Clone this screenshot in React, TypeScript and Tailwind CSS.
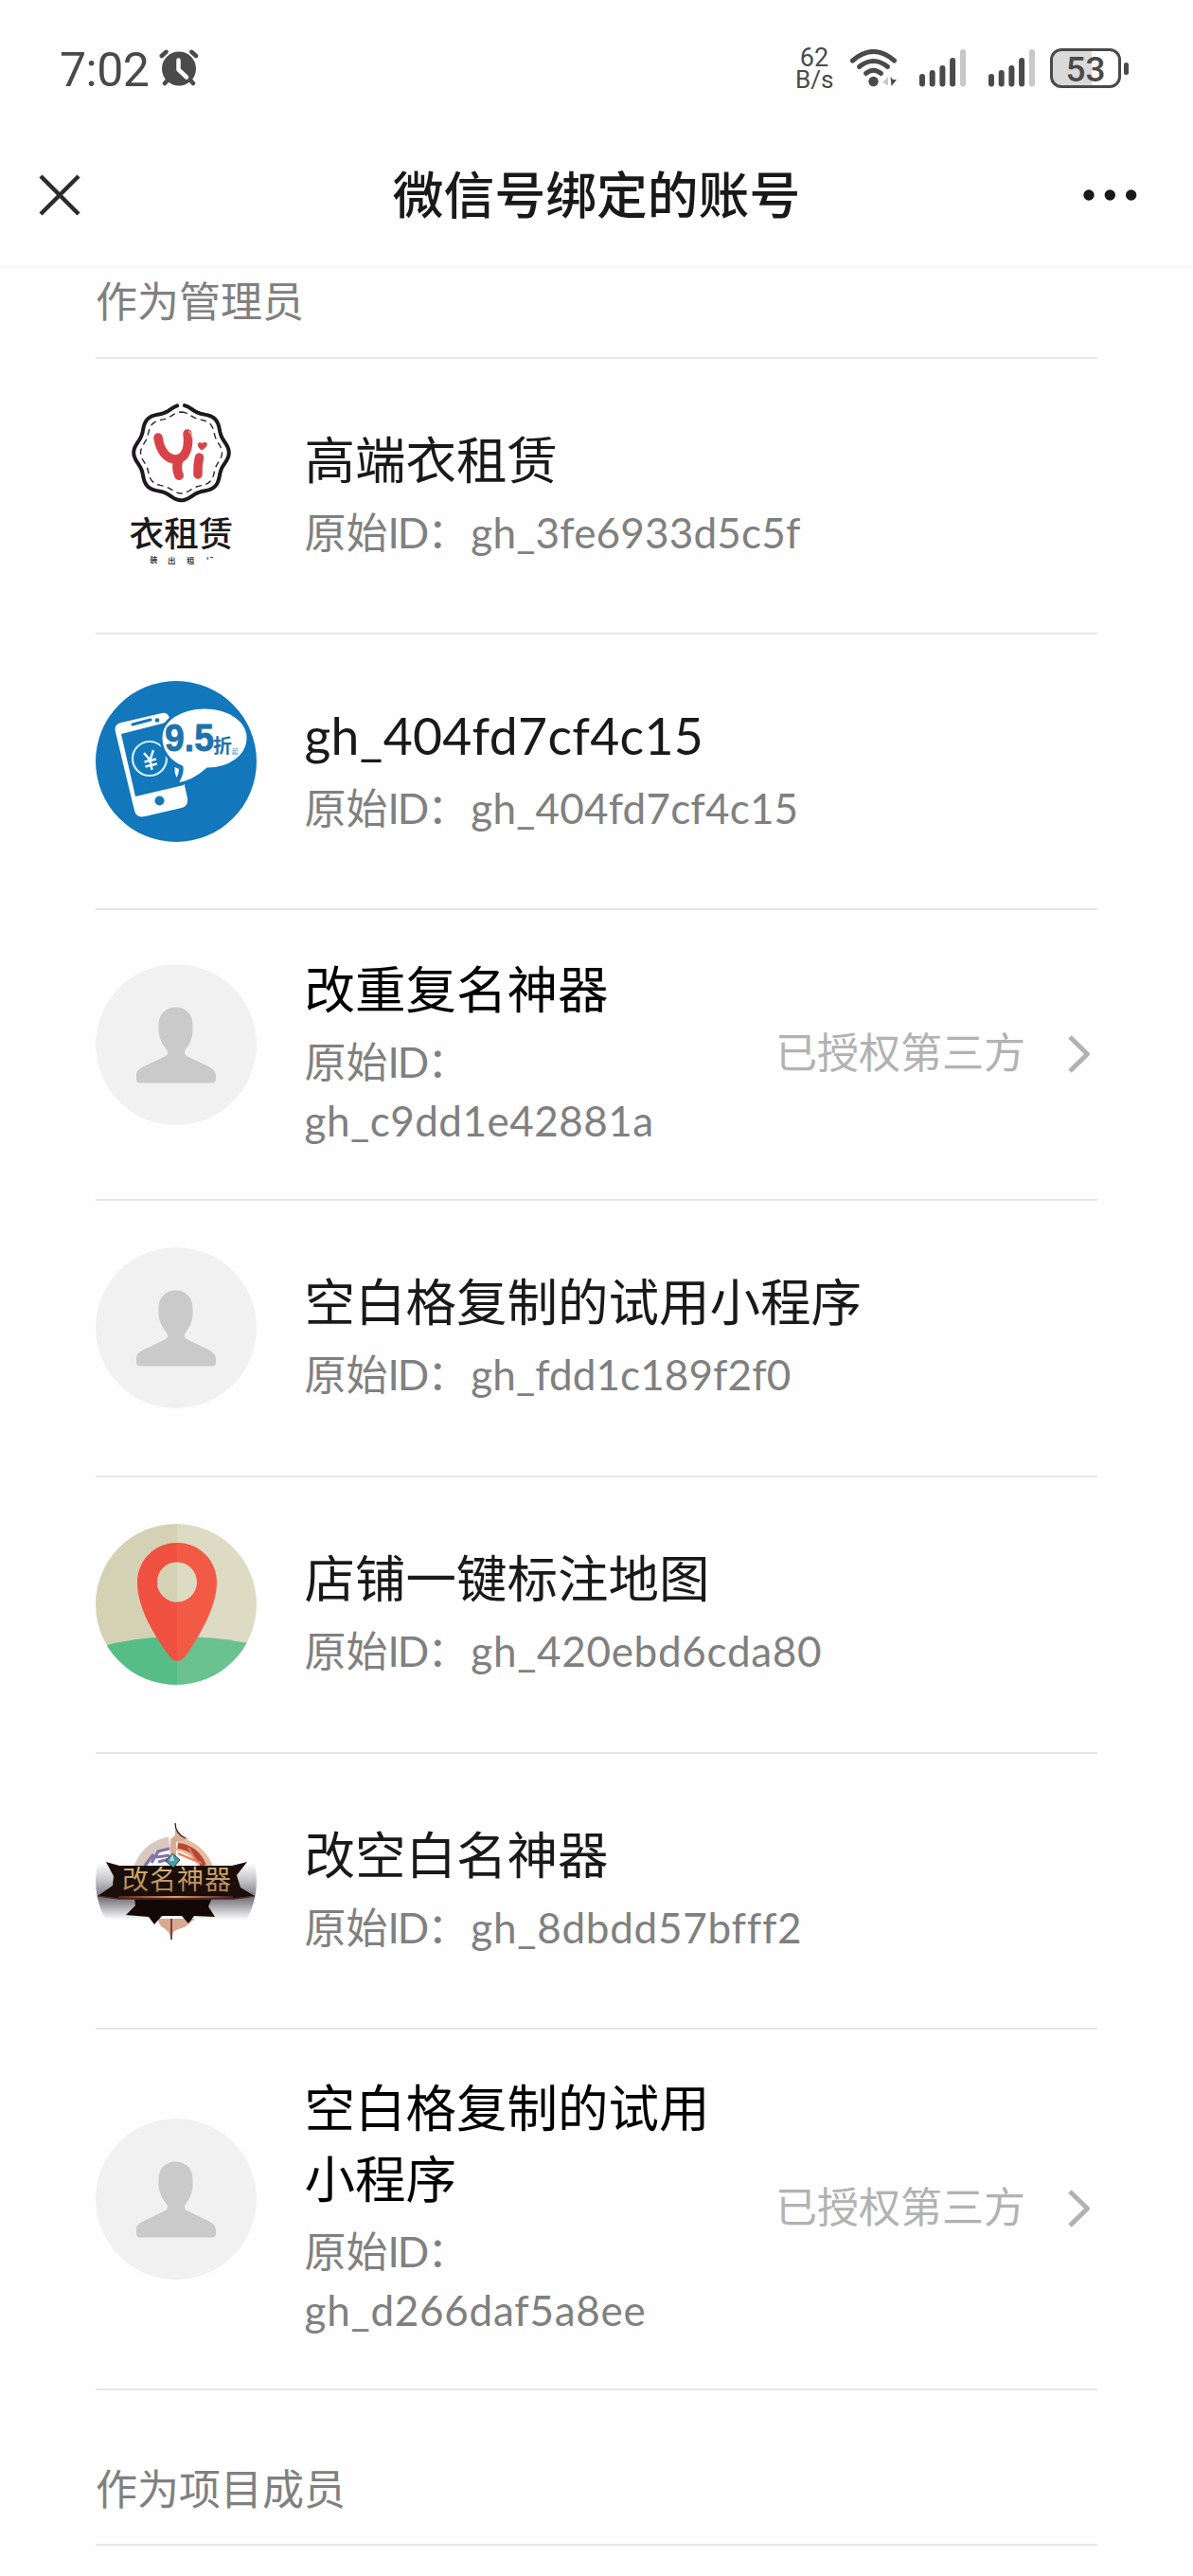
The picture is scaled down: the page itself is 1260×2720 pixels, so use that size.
import React from "react";

const scallop = (cx: number, cy: number, base: number, wave: number, gap: number) => {
  const pts: string[] = [];
  for (let i = gap; i <= 360 - gap; i += 3) {
    const t = (i * Math.PI) / 180;
    const r = base + wave * Math.cos(8 * t);
    pts.push(`${(cx + r * Math.sin(t)).toFixed(2)},${(cy - r * Math.cos(t)).toFixed(2)}`);
  }
  return "M" + pts.join("L");
};

const CJK = "'Lato','Noto Sans CJK SC',sans-serif";

function RentalLogo() {
  return (
    <svg viewBox="0 0 170 170" className="size-[170px] shrink-0 overflow-visible">
      <path d={scallop(90.5, 50, 48, 2.3, 4)} fill="none" stroke="#1c1a1c" strokeWidth="4" strokeLinecap="round" strokeLinejoin="round" />
      <path d={scallop(90.5, 50, 41.2, 1.8, 0)} fill="none" stroke="#2a282a" strokeWidth="1.4" strokeDasharray="6.5 4.5" />
      <g fill="none" stroke="#d8434a" strokeLinecap="round">
        <path d="M66 34C68 48 75 57 85 57C96 56 99 43 97 30" strokeWidth="9.5" />
        <path d="M88 57C85 63 86 69 88 74" strokeWidth="10" />
        <path d="M109.500 55C108 61 107.500 66 108 73" strokeWidth="9.500" />
      </g>
      <path d="M98 27.500q4 1.500 4 7" fill="none" stroke="#f6c9cb" strokeWidth="1.200" />
      <path d="M112 47C106 43 108 37 112.500 40.500C117 37 121 42 112 47Z" fill="#d8434a" stroke="#d8434a" strokeWidth="1" />
      <text x="90.5" y="148.500" textAnchor="middle" fontSize="36" fontWeight="500" fill="#1c1a1c" textLength="110" lengthAdjust="spacingAndGlyphs" fontFamily={CJK}>衣租赁</text>
      <g fontFamily={CJK} fontSize="8.500" fontWeight="500" fill="#222">
        <text x="57" y="166">装</text>
        <text x="76" y="167">出</text>
        <text x="96" y="167">租</text>
      </g>
      <path d="M117 161h2.500M121 160.500h3M118 162.500h1" stroke="#444" strokeWidth="1" />
    </svg>
  );
}

function PhoneLogo() {
  return (
    <svg viewBox="0 0 170 170" className="size-[170px] shrink-0">
      <circle cx="85" cy="85" r="85" fill="#1277bb" />
      <path d="M27 44L70 34Q76 33 78 39L97 124Q98 132 91 134L52 143Q43 145 41 137L21 54Q19 46 27 44Z" fill="#fff" />
      <path d="M27 56L78 43L93 110L42 122Z" fill="#1277bb" />
      <path d="M39 46L58 41" stroke="#1277bb" strokeWidth="3" strokeLinecap="round" />
      <circle cx="65" cy="41.500" r="2.300" fill="#1277bb" />
      <circle cx="67.500" cy="126.500" r="5" fill="#1277bb" />
      <circle cx="57" cy="82" r="18" fill="none" stroke="#cdf1fb" strokeWidth="2.200" />
      <path d="M51 76L57.500 83.500L61 73M57.500 83.500L59.500 94M51.500 85.500L64 82.500M52.500 90.500L65 87.500" fill="none" stroke="#eafaff" strokeWidth="2.500" />
      <path d="M115 28C141 28 161 42 161 60C161 80 141 93 118 93C108 102 97 108 85 109C90 102 92 97 91 91C77 85 69 73 69 60C69 41 90 28 115 28Z" fill="#fff" stroke="#1277bb" strokeWidth="3" />
      <path d="M83 90L91 93Q93 99 86 107Q82 99 83 90Z" fill="#1277bb" />
      <path d="M83.500 91L88 93Q88 98 85.500 102Q83 97 83.500 91Z" fill="#fff" />
      <text x="73" y="74" fontFamily="'Liberation Sans',sans-serif" fontWeight="700" fontSize="41" fill="#1d72ad" stroke="#1d72ad" strokeWidth=".8" textLength="52" lengthAdjust="spacingAndGlyphs">9.5</text>
      <text x="124" y="76" fontFamily={CJK} fontWeight="700" fontSize="20" fill="#1d72ad">折</text>
      <text x="144" y="77" fontFamily={CJK} fontSize="6.500" fill="#4b87ae">起</text>
    </svg>
  );
}

function PersonLogo() {
  return (
    <svg viewBox="0 0 170 170" className="size-[170px] shrink-0">
      <circle cx="85" cy="85" r="85" fill="#f1f1f1" />
      <path d="M84.500 45.500C95 45.500 102.500 53 102.500 64V72C102 79 99 85 94.500 91Q92.500 95 97 97.500L119 108Q127 112 127 118V121Q127 125.500 123 125.500H46.500Q43 125.500 43 121.500V117Q43 112 49 109L73 97.500Q77.500 95 75.500 91C70 84 67 78 66.500 71V64C66.500 53 74 45.500 84.500 45.500Z" fill="#cacaca" />
    </svg>
  );
}

function MapLogo() {
  return (
    <svg viewBox="0 0 170 170" className="size-[170px] shrink-0">
      <defs>
        <clipPath id="mapDisc"><circle cx="85" cy="85" r="85" /></clipPath>
      </defs>
      <g clipPath="url(#mapDisc)">
        <path d="M0 0H86V170H0Z" fill="#d5d1b4" />
        <path d="M86 0H170V170H86Z" fill="#dddbc3" />
        <path d="M0 131Q43 119 86 119V170H0Z" fill="#56bd87" />
        <path d="M86 119Q130 119 170 128V170H86Z" fill="#69c28f" />
      </g>
      <path d="M86 20C62 20 44 39 44 62C44 88 62 118 76 137Q81 145 86 145Z" fill="#f0503f" />
      <path d="M86 20C110 20 128 39 128 62C128 86 112 114 97 137Q91 145 86 145Z" fill="#f35a46" />
      <circle cx="86" cy="61.500" r="21" fill="#dddbc3" />
      <path d="M86 40.500A21 21 0 0 0 86 82.500Z" fill="#d5d1b4" />
    </svg>
  );
}

function BadgeLogo() {
  return (
    <svg viewBox="0 -17 170 170" className="size-[170px] shrink-0">
      <defs>
        <clipPath id="badgeDisc"><circle cx="85" cy="68" r="85" /></clipPath>
        <linearGradient id="haze" x1="0" y1="0" x2="0" y2="1">
          <stop offset="0" stopColor="#fefefe" />
          <stop offset=".32" stopColor="#c4c2c5" />
          <stop offset=".62" stopColor="#77737a" />
          <stop offset="1" stopColor="#fefefe" />
        </linearGradient>
        <linearGradient id="gold" x1="0" y1="0" x2="0" y2="1">
          <stop offset="0" stopColor="#d9bd83" />
          <stop offset="1" stopColor="#a67d49" />
        </linearGradient>
        <linearGradient id="glow" x1="0" y1="0" x2="1" y2="0">
          <stop offset="0" stopColor="#5a2116" />
          <stop offset=".5" stopColor="#f19a52" />
          <stop offset="1" stopColor="#4a1b2b" />
        </linearGradient>
      </defs>
      <g clipPath="url(#badgeDisc)">
        <rect y="49" width="170" height="60" fill="url(#haze)" />
      </g>
      <circle cx="83" cy="70" r="42" fill="#fdf9f5" />
      <path d="M46 57A40 40 0 0 1 78 28" fill="none" stroke="#d8c8bf" strokeWidth="13" />
      <path d="M52 52L61 40M59 49L66 37M64 43L78 41M65 37L78 34M66 48L78 45" stroke="#7d74aa" strokeWidth="3" />
      <path d="M86 29A40 40 0 0 1 118 57" fill="none" stroke="#e3bda2" strokeWidth="14" />
      <path d="M87 31Q106 33 114 52" fill="none" stroke="#b94634" strokeWidth="6" />
      <path d="M87 39L101 45L112 49M98 33L106 46" fill="none" stroke="#e47b58" strokeWidth="2" />
      <path d="M84 7Q85 19 99 24L85 27V45H79V24L84 20Z" fill="#d7ad96" />
      <path d="M84 7Q84 18 95 23" fill="none" stroke="#3d2018" strokeWidth="1.300" />
      <path d="M65 108H105L94 117Q86 119 82 122L80 130Q78 120 69 116Z" fill="#d7a991" />
      <path d="M80 108V130" stroke="#6b2d20" strokeWidth="1.700" />
      <path d="M11 48L25 52H144L160 48L149 62L153 75L168 84L147 87H24L2 84L18 73L19 63Z" fill="#1a0d0a" />
      <path d="M41 86H123L119 95L126 106L104 105L98 113L91 105H70L62 114L56 106L32 104L42 94Z" fill="#140807" />
      <path d="M2 84L24 87H147L168 84" fill="none" stroke="#4f302c" strokeWidth="1.500" />
      <path d="M24 84H145V86H24Z" fill="url(#glow)" />
      <path d="M81 39L89 46L82 54L74 47Z" fill="#4d9aa3" stroke="#253941" strokeWidth="1" />
      <path d="M81 39L83 47L78 47Z" fill="#a8dbe0" />
      <text x="28" y="77" fontFamily={CJK} fontSize="28" fill="url(#gold)" textLength="115">改名神器</text>
    </svg>
  );
}

function Signal() {
  return (
    <svg viewBox="0 0 49 40" className="h-[40px] w-[49px]">
      <g fill="#4a4a4a">
        <rect x="0" y="26" width="6" height="13.500" rx="3" />
        <rect x="10.700" y="22" width="6" height="17.500" rx="3" />
        <rect x="21.400" y="17" width="6" height="22.500" rx="3" />
        <rect x="32.100" y="9" width="6" height="30.500" rx="3" />
      </g>
      <rect x="43" y="0" width="6" height="39.500" rx="3" fill="#c8c8c8" />
    </svg>
  );
}

function StatusBar() {
  return (
    <div className="flex h-[144px] items-center pl-[63px] pr-[68px] text-[#4a4a4a]">
      <span className="w-[94px] pt-[3px] font-[Roboto] text-[50px] leading-none tracking-[-0.5px] whitespace-nowrap">7:02</span>
      <svg viewBox="0 0 42 40" className="ml-[11px] h-[40px] w-[42px]">
        <g stroke="#4a4a4a" strokeLinecap="round" strokeWidth="4.500" fill="none">
          <path d="M2.800 7L7.500 2.800M39 7L34.300 2.800M6 36L10 31.500M36 36L32 31.500" />
        </g>
        <circle cx="21" cy="20.500" r="18" fill="#4a4a4a" />
        <path d="M20.500 11.500V21.500L29 29.500" fill="none" stroke="#fefefe" strokeWidth="4.500" strokeLinecap="round" strokeLinejoin="round" />
      </svg>
      <div className="ml-auto flex items-center">
        <div className="w-[40px] pt-[1px] text-center font-[Roboto] leading-[23px]">
          <div className="text-[27px]">62</div>
          <div className="text-[26px]">B/s</div>
        </div>
        <svg viewBox="0 0 50 40" className="ml-[18px] h-[40px] w-[50px]">
          <g fill="none" stroke="#4a4a4a" strokeWidth="5" strokeLinecap="round">
            <path d="M2.500 12Q24.500-7 46.500 12" />
            <path d="M9.500 18.500Q24.500 6.500 39.500 18.500" />
            <path d="M16.500 25.500Q24.500 19 32.500 25.500" />
          </g>
          <circle cx="24.500" cy="34" r="5.200" fill="#4a4a4a" />
          <path d="M34 35L40 29V38.500L38 37Z" fill="#c8c8c8" />
          <path d="M42.500 29L45 32L49 32L43.500 39Z" fill="#4a4a4a" />
        </svg>
        <div className="ml-[23px]"><Signal /></div>
        <div className="ml-[24px]"><Signal /></div>
        <div className="ml-[16px] flex h-[42px] w-[75px] items-center justify-center rounded-[12px] border-[3px] border-[#4a4a4a] bg-[linear-gradient(90deg,#d9d9d9_60%,#fefefe_60%)] pt-[2px] font-[Roboto] text-[37px] leading-none font-medium">
          53
        </div>
        <div className="ml-[3px] h-[13px] w-[5px] rounded-full bg-[#4a4a4a]" />
      </div>
    </div>
  );
}

type Account = {
  logo: React.ReactNode;
  name: string[];
  id: string;
  height: string;
  spacing: string;
  authorized?: boolean;
  latin?: boolean;
};

const accounts: Account[] = [
  { logo: <RentalLogo />, name: ["高端衣租赁"], id: "gh_3fe6933d5c5f", height: "h-[291px]", spacing: "tracking-[0.2px]" },
  { logo: <PhoneLogo />, name: ["gh_404fd7cf4c15"], id: "gh_404fd7cf4c15", height: "h-[291px]", spacing: "tracking-[0.2px]", latin: true },
  { logo: <PersonLogo />, name: ["改重复名神器"], id: "gh_c9dd1e42881a", height: "h-[307px]", spacing: "tracking-[0.5px]", authorized: true },
  { logo: <PersonLogo />, name: ["空白格复制的试用小程序"], id: "gh_fdd1c189f2f0", height: "h-[292px]", spacing: "tracking-[0.1px]" },
  { logo: <MapLogo />, name: ["店铺一键标注地图"], id: "gh_420ebd6cda80", height: "h-[292px]", spacing: "tracking-[0.7px]" },
  { logo: <BadgeLogo />, name: ["改空白名神器"], id: "gh_8dbdd57bfff2", height: "h-[291px]", spacing: "tracking-[0.75px]" },
  { logo: <PersonLogo />, name: ["空白格复制的试用", "小程序"], id: "gh_d266daf5a8ee", height: "h-[381px]", spacing: "tracking-[0.75px]", authorized: true },
];

function Row({ a }: { a: Account }) {
  return (
    <li className={`flex items-center border-b-2 border-[#e6e6e6] ${a.height}`}>
      <div className="mb-[22px] shrink-0">{a.logo}</div>
      <div className="ml-[50.500px] flex-1 pb-[14px]">
        <div className={`mb-[8.500px] text-[53.500px] leading-[74.500px] whitespace-nowrap ${a.authorized ? "text-black" : "text-[#191919]"}`}>
          {a.name.map((n) => (
            <div key={n} className={a.latin ? "tracking-[0.3px]" : ""}>{n}</div>
          ))}
        </div>
        <div className="-mb-[8px] text-[44px] leading-[62.500px] whitespace-nowrap text-[#808080]">
          <span>原始<span className="tracking-[-2px]">ID</span>：</span>
          {a.authorized && <br />}
          <span className={`${a.spacing} ${a.authorized ? "" : "ml-[2px]"}`}>{a.id}</span>
        </div>
      </div>
      {a.authorized && (
        <div className="flex items-center pr-[6px] text-[44px] leading-none text-[#b2b2b2]">
          <span className="pb-[6px]">已授权第三方</span>
          <svg viewBox="0 0 26 42" className="mb-[2px] ml-[44px] h-[42px] w-[26px]">
            <path d="M3 3L21.500 21L3 39" fill="none" stroke="#b2b2b2" strokeWidth="5" strokeLinejoin="round" />
          </svg>
        </div>
      )}
    </li>
  );
}

export default function App() {
  return (
    <div className="h-[2720px] w-[1260px] overflow-hidden bg-[#fefefe] font-['Lato','Noto_Sans_CJK_SC',sans-serif]" lang="zh-CN">
      <StatusBar />
      <header className="flex h-[139px] items-center justify-between border-b-2 border-[#f5f5f5] px-[40px] pb-[14px]">
        <svg viewBox="0 0 80 46" className="h-[46px] w-[80px]">
          <path d="M3 3L43 43M43 3L3 43" stroke="#2b2b2b" strokeWidth="4.500" />
        </svg>
        <h1 className="text-[53.800px] leading-none font-medium text-[#191919]">微信号绑定的账号</h1>
        <svg viewBox="0 0 80 12" className="h-[12px] w-[80px]">
          <circle cx="10" cy="6" r="5.700" fill="#191919" />
          <circle cx="32.300" cy="6" r="5.700" fill="#191919" />
          <circle cx="54.700" cy="6" r="5.700" fill="#191919" />
        </svg>
      </header>
      <main className="px-[101px]">
        <h2 className="flex h-[96px] items-center border-b-2 border-[#e6e6e6] pb-[24px] text-[44px] leading-none text-[#808080]">作为管理员</h2>
        <ul>
          {accounts.map((a) => (
            <Row key={a.id} a={a} />
          ))}
        </ul>
        <h2 className="flex h-[164px] items-center border-b-2 border-[#e6e6e6] pt-[45px] text-[44px] leading-none text-[#808080]">作为项目成员</h2>
      </main>
    </div>
  );
}
